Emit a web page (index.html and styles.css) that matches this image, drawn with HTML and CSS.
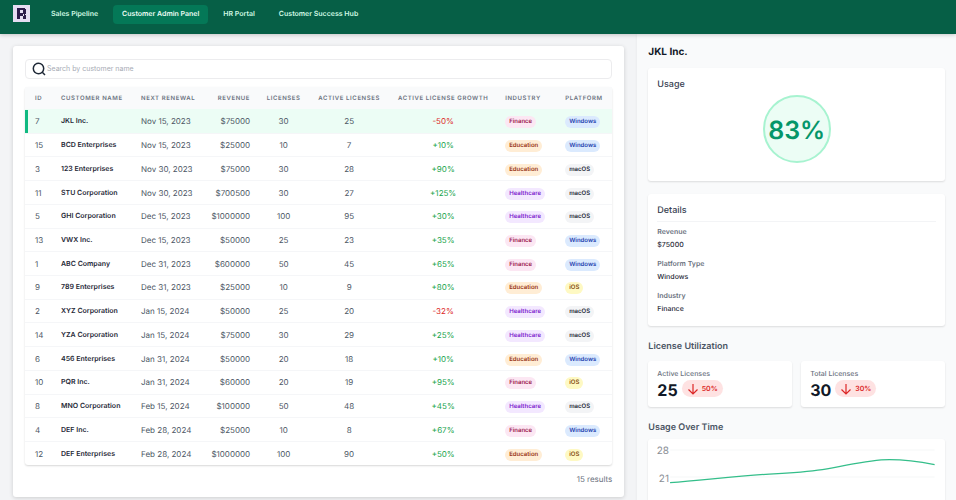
FILE: index.html
```
<!DOCTYPE html>
<html lang="en">
<head>
	<meta charset="utf-8">
	<meta name="viewport" content="width=device-width, initial-scale=1">
	<title>Customer Admin Panel</title>
	<link rel="stylesheet" href="styles.css">
</head>
<body>
	<header class="navbar">
		<svg class="logo" viewBox="0 0 17 17" aria-hidden="true">
			<rect width="17" height="17" fill="#e6dcf3"/>
			<path fill="#2c1a4a" fill-rule="evenodd" d="M4 3h8v1h1v5h-1v1h1v4h-3v-3H7v3H4zM7 5v3h3V5z"/>
			<path fill="#e6dcf3" d="M10 9h1v2h-1z"/>
		</svg>
		<nav class="nav-links">
			<a href="#">Sales Pipeline</a>
			<a href="#" class="active">Customer Admin Panel</a>
			<a href="#">HR Portal</a>
			<a href="#">Customer Success Hub</a>
		</nav>
	</header>

	<div class="layout">
		<main class="main">
			<section class="card panel">
				<label class="search">
					<svg viewBox="0 0 14 14" aria-hidden="true">
						<circle cx="6.5" cy="6.5" r="5.2"/>
						<path d="M10.3 10.3l2.7 2.7"/>
					</svg>
					<input type="text" placeholder="Search by customer name" aria-label="Search by customer name">
				</label>

				<table class="customers">
					<colgroup>
						<col class="c-id">
						<col class="c-name">
						<col class="c-renewal">
						<col class="c-revenue">
						<col class="c-licenses">
						<col class="c-active">
						<col class="c-growth">
						<col class="c-industry">
						<col class="c-platform">
					</colgroup>
					<thead>
						<tr>
							<th>ID</th>
							<th>Customer Name</th>
							<th>Next Renewal</th>
							<th class="right">Revenue</th>
							<th class="center">Licenses</th>
							<th class="center">Active Licenses</th>
							<th class="center">Active License Growth</th>
							<th>Industry</th>
							<th>Platform</th>
						</tr>
					</thead>
					<tbody id="rows"></tbody>
				</table>
				<p class="results"><span id="count">15</span> results</p>
			</section>
		</main>

		<aside class="sidebar">
			<h1>JKL Inc.</h1>

			<section class="card box usage">
				<h2>Usage</h2>
				<div class="circle">83%</div>
			</section>

			<section class="card box details">
				<h2>Details</h2>
				<dl>
					<dt>Revenue</dt>
					<dd>$75000</dd>
					<dt>Platform Type</dt>
					<dd>Windows</dd>
					<dt>Industry</dt>
					<dd>Finance</dd>
				</dl>
			</section>

			<h2 class="section-title">License Utilization</h2>
			<div class="stats">
				<div class="card stat">
					<span class="stat-label">Active Licenses</span>
					<div class="stat-row">
						<strong>25</strong>
						<span class="trend"><svg viewBox="0 0 12 12" aria-hidden="true"><path d="M6 1v10M1.500 6.500L6 11l4.500-4.500"/></svg>50%</span>
					</div>
				</div>
				<div class="card stat">
					<span class="stat-label">Total Licenses</span>
					<div class="stat-row">
						<strong>30</strong>
						<span class="trend"><svg viewBox="0 0 12 12" aria-hidden="true"><path d="M6 1v10M1.500 6.500L6 11l4.500-4.500"/></svg>30%</span>
					</div>
				</div>
			</div>

			<h2 class="section-title">Usage Over Time</h2>
			<div class="card chart">
				<svg viewBox="0 0 296 76" role="img" aria-label="Usage over time">
					<path class="grid" d="M22 11h264M22 38h264M22 65h264"/>
					<text x="21" y="15">28</text>
					<text x="21" y="43">21</text>
					<path class="line" d="M22 43.500C55 41 88 37 121 35C139 34 157 33 174 30.500C198 27 218 20.500 241 20.500C256 20.500 271 22.500 286 25.500"/>
				</svg>
			</div>
		</aside>
	</div>

	<script src="app.js"></script>
</body>
</html>
```
FILE: styles.css
```
* {box-sizing: border-box;}

body {
	margin: 0;
	height: 100vh;
	display: flex;
	flex-direction: column;
	overflow: hidden;
	background: #f3f4f6;
	color: #374151;
	font-family: Inter, "Liberation Sans", sans-serif;
	font-size: 7px;
	line-height: 12px;
	text-rendering: geometricPrecision;
}

h1, h2, p, dl, dd {margin: 0;}
h1 {font-size: 10px; font-weight: 700; line-height: 16px; color: #111827;}
h2 {font-size: 9px; font-weight: 500; line-height: 14px; color: #374151;}

/* top bar */
.navbar {
	display: flex;
	align-items: flex-start;
	gap: 12px;
	padding: 5px 13px 10px;
	background: #065f46;
	box-shadow: 0 1px 4px rgba(0,0,0,.2);
	position: relative;
}
.logo {width: 17px; height: 17px;}
.nav-links {display: flex; gap: 6px;}
.nav-links a {
	padding: 3px 9px 4px;
	border-radius: 4px;
	color: #d1fae5;
	font-weight: 600;
	text-decoration: none;
}
.nav-links .active {background: #047857; color: #ecfdf5;}

.layout {flex: 1; display: grid; grid-template-columns: 2fr 1fr; min-height: 0;}
.main {padding: 12px 13px;}

.card {
	background: #fff;
	border-radius: 3px;
	box-shadow: 0 1px 2px rgba(0,0,0,.12);
}
.panel {padding: 13px 12px 12px; box-shadow: 0 1px 4px rgba(0,0,0,.16);}

.search {
	display: flex;
	align-items: center;
	gap: 1px;
	height: 20px;
	padding: 0 6px;
	border: 1px solid #ececee;
	border-radius: 4px;
}
.search svg {width: 14px; height: 14px; fill: none; stroke: #1f2937; stroke-width: 1.5;}
.search input {
	flex: 1;
	padding: 0;
	border: 0;
	outline: 0;
	background: none;
	font: inherit;
	color: #374151;
}
.search input::placeholder {color: #a7acb5;}

/* customers */
.customers {
	width: 100%;
	height: 378px;
	margin-top: 8px;
	table-layout: fixed;
	border-collapse: separate;
	border-spacing: 0;
	border-radius: 3px;
	box-shadow: 0 1px 2px rgba(0,0,0,.16);
	white-space: nowrap;
}
.c-id {width: 28px;}
.c-name {width: 80px;}
.c-renewal {width: 74px;}
.c-revenue {width: 51px;}
.c-licenses {width: 51px;}
.c-active {width: 80px;}
.c-growth {width: 108px;}
.c-industry {width: 60px;}
.c-platform {width: 55px;}

th, td {padding: 0 8px; text-align: left;}
th:first-child, td:first-child {padding-left: 10px;}
th {
	height: 22px;
	padding-top: 2px;
	background: #f9fafb;
	color: #6b7280;
	font-size: 6px;
	font-weight: 600;
	letter-spacing: .1em;
	text-transform: uppercase;
}
td {border-top: 1px solid #f5f6f8; color: #4b5563; font-size: 8px;}
.right {text-align: right; padding-left: 0;}
.center {text-align: center; padding-left: 0; padding-right: 0;}
.name {color: #1f2937; font-size: 7px; font-weight: 600;}
.up {color: #16a34a;}
.down {color: #dc2626;}
.selected td {background: #ecfdf5; border-color: #ecfdf5;}
.selected td:first-child {box-shadow: inset 3px 0 #10b981;}

.tag {
	display: inline-block;
	padding: 0 4px;
	border-radius: 6px;
	font-size: 6px;
	font-weight: 600;
}
.finance {background: #fce7f3; color: #9d174d;}
.education {background: #ffedd5; color: #9a3412;}
.healthcare {background: #f3e8ff; color: #7e22ce;}
.windows {background: #dbeafe; color: #1e40af;}
.macos {background: #f3f4f6; color: #1f2937;}
.ios {background: #fef9c3; color: #854d0e;}

.results {margin-top: 8px; text-align: right; color: #6b7280; font-size: 8px;}

/* customer details */
.sidebar {
	padding: 10px 11px 0;
	background: #f9fafb;
	overflow: hidden;
	box-shadow: 0 0 3px rgba(0,0,0,.06);
}
.box {padding: 10px 9px 9px; margin-top: 8px;}
.usage {min-height: 113px;}
.circle {
	width: 68px;
	height: 68px;
	margin: 3px auto 0;
	border: 2px solid #a7f3d0;
	border-radius: 50%;
	background: #ecfdf5;
	color: #059669;
	font-size: 25px;
	font-weight: 600;
	line-height: 68px;
	display: flex;
	justify-content: center;
}
.details {margin-top: 13px; padding-bottom: 4px;}
.details h2 {padding-bottom: 3px; border-bottom: 1px solid #f3f4f6; margin-bottom: 4px;}
dt {margin-bottom: 1px; color: #6b7280; font-weight: 600;}
dd {margin-bottom: 7px; color: #1f2937; font-weight: 500;}

.section-title {margin: 14px 0 7px; font-weight: 600; color: #4b5563;}
.stats {display: grid; grid-template-columns: 1fr 1fr; gap: 9px;}
.stat {padding: 7px 9px;}
.stat-label {color: #6b7280; display: block; font-weight: 500;}
.stat-row {display: flex; align-items: flex-start; gap: 4px;}
.stat strong {color: #111827; font-size: 16px; font-weight: 700; line-height: 20px;}
.trend {
	display: flex;
	align-items: center;
	gap: 3px;
	height: 17px;
	padding: 0 5px;
	border-radius: 9px;
	background: #fee2e2;
	color: #dc2626;
	font-weight: 600;
}
.trend svg {width: 12px; height: 12px; fill: none; stroke: #dc2626; stroke-width: 1.2;}

.stats + .section-title {margin-bottom: 4px;}
.chart svg {display: block; width: 100%;}
.chart text {font-size: 10px; fill: #8b8f96; text-anchor: end;}
.grid {stroke: #f6f7f8; fill: none;}
.line {stroke: #34be8a; stroke-width: 1.2; fill: none;}
```
FILE: app.js
```
const customers = [
	[7, 'JKL Inc.', 'Nov 15, 2023', 75000, 30, 25, -50, 'Finance', 'Windows'],
	[15, 'BCD Enterprises', 'Nov 15, 2023', 25000, 10, 7, 10, 'Education', 'Windows'],
	[3, '123 Enterprises', 'Nov 30, 2023', 75000, 30, 28, 90, 'Education', 'macOS'],
	[11, 'STU Corporation', 'Nov 30, 2023', 700500, 30, 27, 125, 'Healthcare', 'macOS'],
	[5, 'GHI Corporation', 'Dec 15, 2023', 1000000, 100, 95, 30, 'Healthcare', 'macOS'],
	[13, 'VWX Inc.', 'Dec 15, 2023', 50000, 25, 23, 35, 'Finance', 'Windows'],
	[1, 'ABC Company', 'Dec 31, 2023', 600000, 50, 45, 65, 'Finance', 'Windows'],
	[9, '789 Enterprises', 'Dec 31, 2023', 25000, 10, 9, 80, 'Education', 'iOS'],
	[2, 'XYZ Corporation', 'Jan 15, 2024', 50000, 25, 20, -32, 'Healthcare', 'macOS'],
	[14, 'YZA Corporation', 'Jan 15, 2024', 75000, 30, 29, 25, 'Healthcare', 'macOS'],
	[6, '456 Enterprises', 'Jan 31, 2024', 50000, 20, 18, 10, 'Education', 'Windows'],
	[10, 'PQR Inc.', 'Jan 31, 2024', 60000, 20, 19, 95, 'Finance', 'iOS'],
	[8, 'MNO Corporation', 'Feb 15, 2024', 100000, 50, 48, 45, 'Healthcare', 'macOS'],
	[4, 'DEF Inc.', 'Feb 28, 2024', 25000, 10, 8, 67, 'Finance', 'Windows'],
	[12, 'DEF Enterprises', 'Feb 28, 2024', 1000000, 100, 90, 50, 'Education', 'iOS']
];
const selectedId = 7;

function tag(text) {
	return `<span class="tag ${text.toLowerCase()}">${text}</span>`;
}

document.getElementById('rows').innerHTML = customers.map(([id, name, renewal, revenue, licenses, active, growth, industry, platform]) => `
	<tr class="${id === selectedId ? 'selected' : ''}">
		<td>${id}</td>
		<td class="name">${name}</td>
		<td>${renewal}</td>
		<td class="right">$${revenue}</td>
		<td class="center">${licenses}</td>
		<td class="center">${active}</td>
		<td class="center ${growth < 0 ? 'down' : 'up'}">${growth > 0 ? '+' : ''}${growth}%</td>
		<td>${tag(industry)}</td>
		<td>${tag(platform)}</td>
	</tr>`).join('');
document.getElementById('count').textContent = customers.length;
```
